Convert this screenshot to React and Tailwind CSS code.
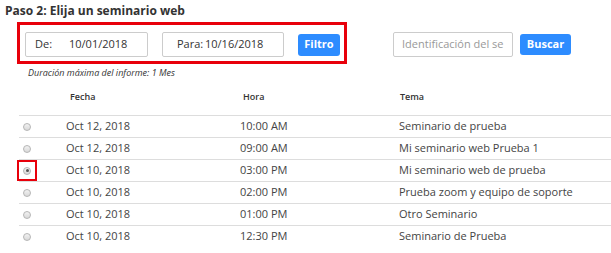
import React from "react";

const rows = [
    { date: "Oct 12, 2018", time: "10:00 AM", topic: "Seminario de prueba" },
    { date: "Oct 12, 2018", time: "09:00 AM", topic: "Mi seminario web Prueba 1" },
    { date: "Oct 10, 2018", time: "03:00 PM", topic: "Mi seminario web de prueba", selected: true },
    { date: "Oct 10, 2018", time: "02:00 PM", topic: "Prueba zoom y equipo de soporte" },
    { date: "Oct 10, 2018", time: "01:00 PM", topic: "Otro Seminario" },
    { date: "Oct 10, 2018", time: "12:30 PM", topic: "Seminario de Prueba" },
];

const Radio = ({ checked }) => (
    <span className="relative block w-[8px] h-[8px]">
        <span className="block w-[8px] h-[8px] rounded-full border border-[#b5b5b5] bg-gradient-to-b from-[#f2f2f2] to-[#d9d9d9] flex items-center justify-center">
            {checked && <span className="block w-[3px] h-[3px] rounded-full bg-[#555]" />}
        </span>
        {checked && (
            <span className="absolute -left-[6px] -top-[7px] w-[20px] h-[21px] border-2 border-[#e8000b]" />
        )}
    </span>
);

const App = () => {
    return (
        <div
            className="w-[611px] h-[253px] bg-white overflow-hidden text-[#444]"
            style={{ fontFamily: '"Open Sans", "Liberation Sans", sans-serif' }}
        >
            {/* Title */}
            <div className="h-[22px] leading-[22px] pl-[5px] text-[12px] font-bold text-[#333]">
                Paso 2: Elija un seminario web
            </div>

            {/* Filters */}
            <div className="flex items-start h-[42px]">
                <div className="ml-[17px] w-[330px] h-[42px] border-[3px] border-[#e8000b] flex items-center pl-[5px] pt-[3px]">
                    <div className="w-[123px] h-[25px] border border-[#ccc] rounded-[2px] flex items-center text-[11px] text-[#333]">
                        <span className="pl-[9px] w-[43px]">De:</span>
                        <span>10/01/2018</span>
                    </div>
                    <div className="ml-[14px] w-[122px] h-[25px] border border-[#ccc] rounded-[2px] flex items-center text-[11px] text-[#333]">
                        <span className="pl-[14px] w-[42px]">Para:</span>
                        <span>10/16/2018</span>
                    </div>
                    <button className="ml-[14px] w-[42px] h-[22px] rounded-[3px] bg-[#2d8cff] text-white text-[11px] font-bold">
                        Filtro
                    </button>
                </div>
                <div className="ml-[46px] mt-[10px] flex items-center">
                    <div className="w-[120px] h-[25px] border border-[#ccc] rounded-[2px] flex items-center pl-[8px] text-[11px] text-[#999] whitespace-nowrap overflow-hidden">
                        Identificación del se
                    </div>
                    <button className="ml-[7px] w-[51px] h-[21px] rounded-[3px] bg-[#2d8cff] text-white text-[11px] font-bold">
                        Buscar
                    </button>
                </div>
            </div>

            {/* Caption */}
            <div className="h-[18px] leading-[18px] pl-[28px] text-[9px] italic text-[#333]">
                Duración máxima del informe: 1 Mes
            </div>

            {/* Table */}
            <div className="ml-[19px]">
                <div className="grid grid-cols-[47px_174px_159px_1fr] h-[33px] items-center pb-[3px] text-[9px] font-semibold text-[#333]">
                    <div />
                    <div className="pl-[4px]">Fecha</div>
                    <div className="pl-[3px]">Hora</div>
                    <div className="pl-[1px]">Tema</div>
                </div>
                {rows.map((row, i) => (
                    <div
                        key={i}
                        className="grid grid-cols-[47px_174px_159px_1fr] h-[22px] items-center border-t border-[#ddd] text-[11px]"
                    >
                        <div className="pl-[4px]">
                            <Radio checked={row.selected} />
                        </div>
                        <div>{row.date}</div>
                        <div>{row.time}</div>
                        <div>{row.topic}</div>
                    </div>
                ))}
            </div>
        </div>
    );
};

export default App;
